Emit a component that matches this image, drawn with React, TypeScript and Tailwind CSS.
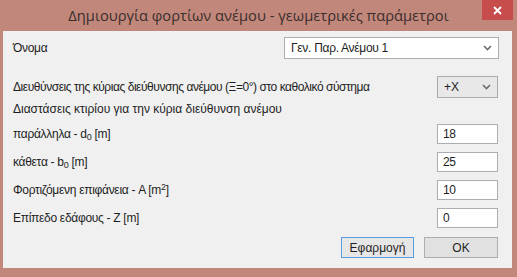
import React from 'react'

const font = { fontFamily: '"Liberation Sans", Arial, sans-serif' }

function Chevron() {
  return (
    <svg width="9" height="6" viewBox="0 0 9 6" className="shrink-0">
      <path d="M1 1 L4.5 4.5 L8 1" fill="none" stroke="#6d6d6d" strokeWidth="1.6" />
    </svg>
  )
}

function Field({ value }: { value: string }) {
  return (
    <div className="w-[61px] h-[20px] bg-white border border-[#abadb3] flex items-center pl-[5px] text-[12px] text-[#1e1e1e]">
      {value}
    </div>
  )
}

function Row({ label, value }: { label: React.ReactNode; value: string }) {
  return (
    <div className="flex items-center justify-between h-[20px]">
      <span>{label}</span>
      <Field value={value} />
    </div>
  )
}

export default function App() {
  return (
    <div className="w-[517px] h-[277px] bg-[#c2877b] flex flex-col overflow-hidden" style={font}>
      {/* title bar */}
      <div className="relative h-[31px] shrink-0 flex items-center justify-center">
        <span
          className="text-[14.7px] text-[#3a2e2c] -mt-[1px]"
          style={{ fontFamily: '"Open Sans", "Noto Sans", sans-serif' }}
        >
          Δημιουργία φορτίων ανέμου - γεωμετρικές παράμετροι
        </span>
        <div className="absolute right-[4px] top-0 w-[31px] h-[20px] bg-[#c74c4c] flex items-center justify-center">
          <svg width="9" height="9" viewBox="0 0 9 9">
            <path d="M1 1 L8 8 M8 1 L1 8" stroke="white" strokeWidth="1.8" />
          </svg>
        </div>
      </div>

      {/* client area */}
      <div className="ml-[3px] mr-[5px] h-[237px] bg-[#f0f0f0] flex flex-col pl-[10px] pr-[14px] text-[12px] text-[#1e1e1e] tracking-[-0.3px]">
        <div className="mt-[6px] h-[22px] flex items-center justify-between">
          <span>Όνομα</span>
          <div className="w-[215px] h-[22px] bg-white border border-[#abadb3] flex items-center justify-between pl-[6px] pr-[6px] mr-[-1px]">
            <span>Γεν. Παρ. Ανέμου 1</span>
            <Chevron />
          </div>
        </div>

        <div className="mt-[17px] h-[22px] flex items-center justify-between">
          <span className="tracking-[-0.45px]">
            Διευθύνσεις της κύριας διεύθυνσης ανέμου (Ξ=0°) στο καθολικό σύστημα
          </span>
          <div className="w-[61px] h-[22px] bg-[#e8e8e8] border border-[#acacac] flex items-center justify-between pl-[6px] pr-[6px] tracking-normal">
            <span>+X</span>
            <Chevron />
          </div>
        </div>

        <div className="mt-[3px] h-[16px] flex items-center tracking-normal">
          Διαστάσεις κτιρίου για την κύρια διεύθυνση ανέμου
        </div>

        <div className="mt-[7px] flex flex-col gap-[8px]">
          <Row
            label={
              <>
                παράλληλα - d<sub className="text-[9px]">0</sub> [m]
              </>
            }
            value="18"
          />
          <Row
            label={
              <>
                κάθετα - b<sub className="text-[9px]">0</sub> [m]
              </>
            }
            value="25"
          />
          <Row
            label={
              <>
                Φορτιζόμενη επιφάνεια - A [m<sup className="text-[9px]">2</sup>]
              </>
            }
            value="10"
          />
          <Row label="Επίπεδο εδάφους - Z [m]" value="0" />
        </div>

        <div className="mt-[9px] flex justify-end gap-[10px] tracking-normal">
          <button className="w-[73px] h-[21px] bg-[#e6e6e6] border border-[#569de5] text-[12px] text-[#1e1e1e]">
            Εφαρμογή
          </button>
          <button className="w-[74px] h-[21px] bg-[#e1e1e1] border border-[#adadad] text-[12px] text-[#1e1e1e]">
            OK
          </button>
        </div>
      </div>
    </div>
  )
}
